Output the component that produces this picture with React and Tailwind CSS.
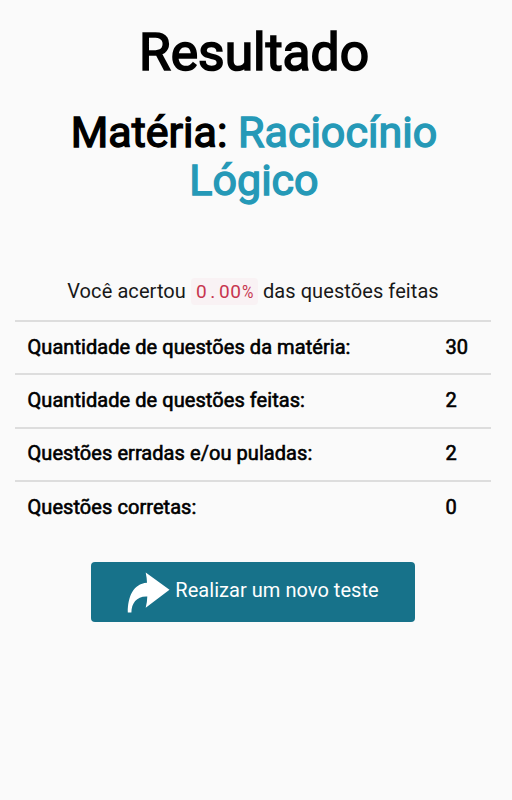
import React from 'react'

const linhas = [
  { titulo: 'Quantidade de questões da matéria:', valor: 30 },
  { titulo: 'Quantidade de questões feitas:', valor: 2 },
  { titulo: 'Questões erradas e/ou puladas:', valor: 2 },
  { titulo: 'Questões corretas:', valor: 0 },
]

// Seta do botão "novo teste"
function IconeSeta() {
  return (
    <svg className="h-[41px] w-[43px] shrink-0" viewBox="0 0 43 41" fill="#fff">
      <path d="M18.7 0.5 L42.5 17.8 L18.7 35.8 Q20.2 30 20.3 24.6 C10 24 4.5 31 4.4 40.5 L0.8 40.5 C0.8 25 6 12 20 10.8 Q19.8 5.5 18.7 0.5 Z" />
    </svg>
  )
}

function App() {
  return (
    <div className="min-h-screen bg-[#fafafa] pt-[23px] pr-[21px] pl-[15px] font-['Roboto',sans-serif] text-black">
      <h1 className="pl-[2px] text-center text-[51.6px] leading-[60px] [-webkit-text-stroke:1.7px_currentColor]">Resultado</h1>
      <h2 className="mt-[25px] pl-[2px] text-center text-[43px] leading-[48px] [-webkit-text-stroke:1.4px_currentColor]">
        Matéria: <span className="text-[#2599b7]">Raciocínio</span>{' '}
        <span className="text-[#2599b7]">Lógico</span>
      </h2>

      <p className="mt-[72px] text-center text-[20px] leading-[30px] tracking-[0.08px] text-[#181818]">
        Você acertou{' '}
        <code className="rounded bg-[#f9f2f4] px-[5px] py-0.5 font-['Roboto',sans-serif] text-[19px] tracking-[0.8px] text-[#c7354e]">
          0<span className="px-[2.8px]">.</span>00
          <span className="inline-block w-[11px] origin-left scale-x-[.82] tracking-normal">%</span>
        </code>{' '}
        das questões feitas
      </p>

      <div className="mt-[13px]">
        {linhas.map((linha) => (
          <div key={linha.titulo} className="flex h-[53.3px] items-center border-t-2 border-[#dddddd] px-[12.5px] pb-[2px] text-[20px] tracking-[0.06px] [-webkit-text-stroke:0.6px_currentColor]">
            <span className="flex-1">{linha.titulo}</span>
            <span className="w-[33px]">{linha.valor}</span>
          </div>
        ))}
      </div>

      <button className="mx-auto mt-[29px] flex h-[60px] w-[324px] items-center justify-center gap-[5px] rounded bg-[#17728a] text-[20px] tracking-[0.04px] text-white">
        <IconeSeta />
        <span className="pb-1">Realizar um novo teste</span>
      </button>
    </div>
  )
}

export default App
